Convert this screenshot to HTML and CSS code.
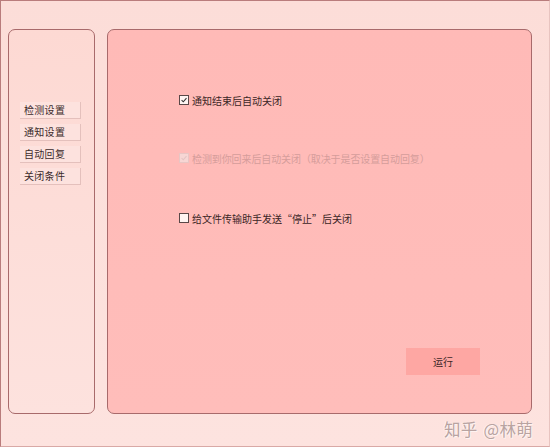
FILE: index.html
```html
<!DOCTYPE html>
<html lang="zh-CN">
<head>
<meta charset="utf-8">
<link rel="stylesheet" href="styles.css">
</head>
<body>
<div class="window">
  <div class="side">
    <div class="navbtn">检测设置</div>
    <div class="navbtn">通知设置</div>
    <div class="navbtn">自动回复</div>
    <div class="navbtn">关闭条件</div>
  </div>
  <div class="main">
    <label class="row r1"><span class="box checked"><svg viewBox="0 0 9 9"><path d="M1.8 4.6 L3.7 6.5 L7.3 2.3" fill="none" stroke="#333" stroke-width="1.2"/></svg></span>通知结束后自动关闭</label>
    <label class="row r2 disabled"><span class="box checked"><svg viewBox="0 0 9 9"><path d="M1.8 4.6 L3.7 6.5 L7.3 2.3" fill="none" stroke="#e3c4c2" stroke-width="1.2"/></svg></span>检测到你回来后自动关闭（取决于是否设置自动回复）</label>
    <label class="row r3"><span class="box"></span>给文件传输助手发送“停止”后关闭</label>
    <div class="runrow"><div class="run">运行</div></div>
  </div>
  <div class="mark">知乎 <span class="gap">@林萌</span></div>
</div>
</body>
</html>
```
FILE: styles.css
```css
html, body { margin: 0; padding: 0; }
body {
  width: 550px; height: 447px; overflow: hidden;
  font-family: "Noto Sans CJK SC", "Noto Sans", sans-serif;
  color: #3b2b2b;
  text-spacing-trim: space-all;
}
.window {
  box-sizing: border-box;
  width: 550px; height: 447px;
  position: relative;
  border: 1px solid #b97c7c;
  border-right-color: #e8c4c0;
  border-bottom-color: #d9a9a6;
  background: linear-gradient(#fcddd8, #fde3df);
  display: flex;
  align-items: flex-start;
  padding: 28px 0 0 7px;
  gap: 12px;
}
.side {
  box-sizing: border-box;
  width: 87px; height: 385px;
  border: 1.5px solid #a86a6b;
  border-radius: 7px;
  background: linear-gradient(#fdd9d3, #fde2de);
  padding: 72px 0 0 11px;
  display: flex; flex-direction: column; gap: 5px;
}
.navbtn {
  width: 61px; height: 17px;
  box-sizing: border-box;
  background: #fde2de;
  border-right: 1px solid #e4c0bc;
  border-bottom: 1px solid #e4c0bc;
  font-size: 10px; line-height: 16px;
  padding-left: 4px;
  color: #3b2b2b;
  letter-spacing: 0.3px;
}
.main {
  box-sizing: border-box;
  width: 425px; height: 385px;
  border: 1.5px solid #a86a6b;
  border-radius: 7px;
  background: linear-gradient(#ffbab7, #ffbdba);
  display: flex; flex-direction: column;
  padding: 63px 0 0 71px;
}
.row {
  display: flex; align-items: center;
  height: 14px;
  font-size: 10px;
  color: #3b2626;
  white-space: nowrap;
  text-spacing-trim: space-all;
}
.r2 { margin-top: 44px; letter-spacing: -0.1px; }
.r3 { margin-top: 46px; }
.box {
  box-sizing: border-box;
  width: 10px; height: 10px;
  border: 1px solid #5a4848;
  background: #fff4f2;
  margin-right: 3px;
  display: flex; flex: none;
}
.box svg { width: 8px; height: 8px; }
.disabled { color: #d59d9b; }
.disabled .box { border-color: #e8c6c4; background: #f7d6d4; }
.runrow {
  display: flex; justify-content: flex-end;
  margin-top: 123px;
  padding-right: 51px;
}
.run {
  width: 74px; height: 27px;
  background: #fea7a3;
  font-size: 10px; line-height: 27px;
  text-align: center;
  color: #3b2626;
}
.mark {
  position: absolute;
  right: 16px; bottom: 5px;
  font-size: 16.5px;
  color: #b9a3a1;
  text-shadow: 1px 1px 0 #fff3f1, -1px 0 0 #fff3f1;
  letter-spacing: 0.3px;
}
.gap { margin-left: 2px; }
```
